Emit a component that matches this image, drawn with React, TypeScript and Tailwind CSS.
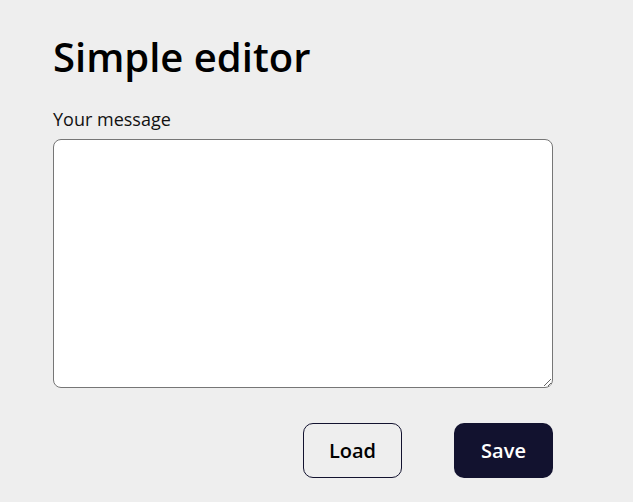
export default function App() {
  return (
    <main
      className="min-h-[502px] bg-[#eeeeee] px-[53px] pt-[25px]"
      style={{ fontFamily: '"Open Sans", sans-serif' }}
    >
      <div className="w-[500px]">
        <h1 className="text-[40px] font-semibold leading-[64px] text-black">Simple editor</h1>
        <label className="mt-[17px] block text-[18px] leading-[26px] text-[#111]">
          Your message
          <textarea className="mt-[7px] block h-[249px] w-[500px] rounded-[8px] border border-[#767676] bg-white p-2 text-[16px] outline-none" />
        </label>
        <div className="mt-[35px] flex justify-end gap-[52px]">
          <button
            type="button"
            className="h-[55px] w-[99px] rounded-[10px] border border-[#12122f] bg-transparent text-[20px] font-semibold text-black"
          >
            Load
          </button>
          <button
            type="button"
            className="h-[55px] w-[99px] rounded-[10px] bg-[#12122f] text-[20px] font-semibold text-white"
          >
            Save
          </button>
        </div>
      </div>
    </main>
  );
}
